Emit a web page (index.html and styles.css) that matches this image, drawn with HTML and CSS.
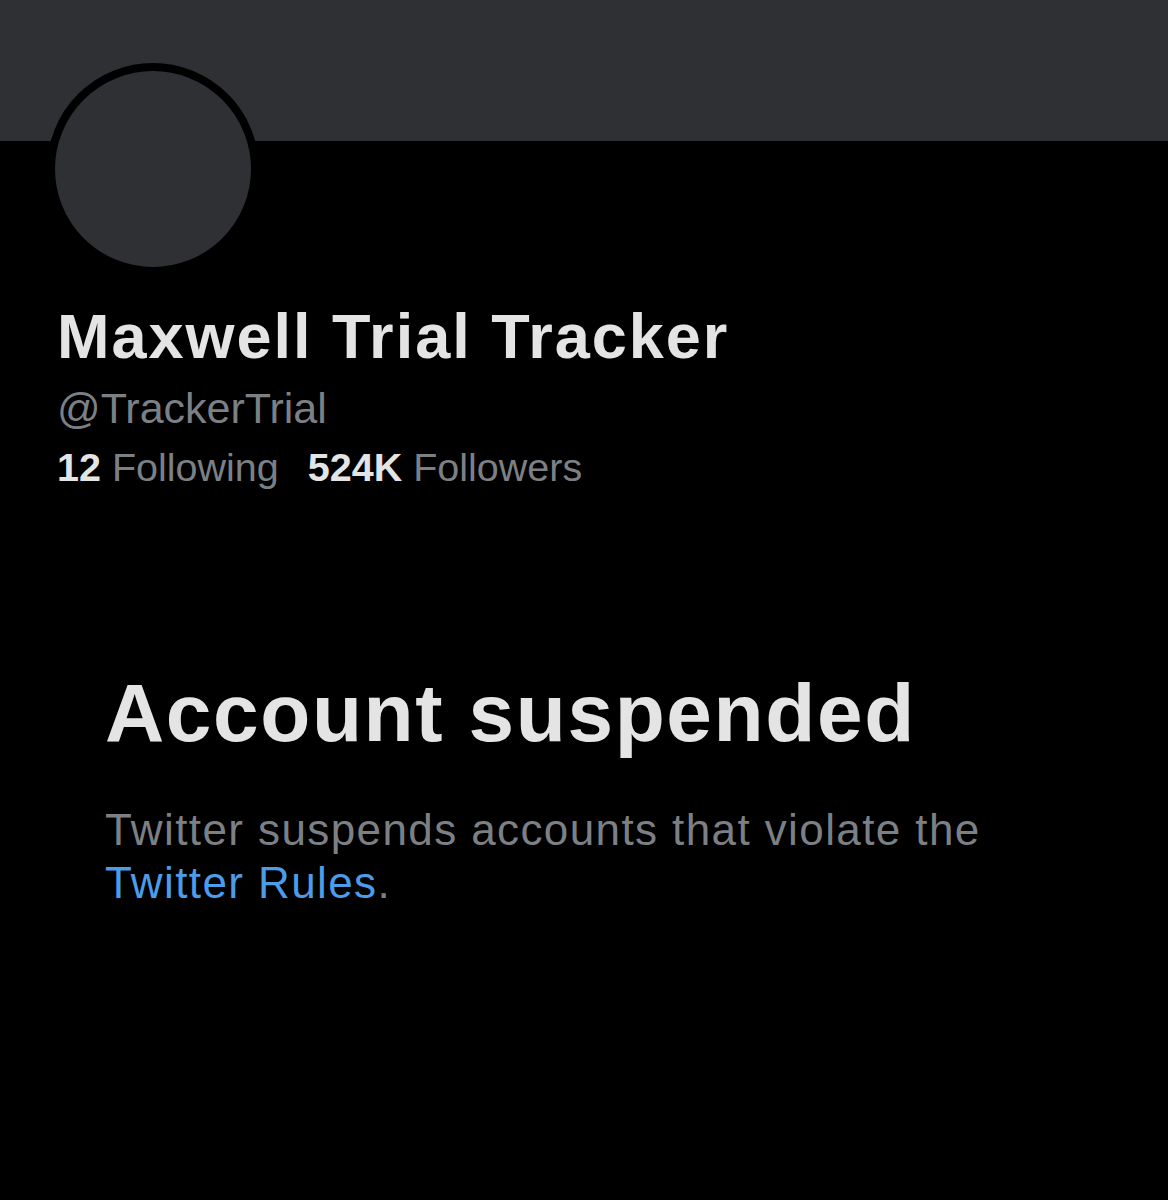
FILE: index.html
```html
<!DOCTYPE html>
<html>
<head>
<meta charset="utf-8">
<link rel="stylesheet" href="styles.css">
</head>
<body>
<div class="banner"></div>
<div class="profile">
  <div class="avatar"></div>
  <h1 class="name">Maxwell Trial Tracker</h1>
  <div class="handle">@TrackerTrial</div>
  <div class="stats">
    <span class="stat"><b>12</b> Following</span>
    <span class="stat"><b>524K</b> Followers</span>
  </div>
</div>
<div class="suspended">
  <h2 class="title">Account suspended</h2>
  <p class="desc">Twitter suspends accounts that violate the<br><a class="link" href="#">Twitter Rules</a>.</p>
</div>
</body>
</html>
```
FILE: styles.css
```css
html, body {
  margin: 0;
  padding: 0;
  background: #000;
}
body {
  font-family: "Liberation Sans", Arial, sans-serif;
  width: 1168px;
  height: 1200px;
  overflow: hidden;
}
.banner {
  height: 141px;
  background: #2f3034;
}
.profile {
  padding-left: 57px;
}
.avatar {
  width: 196px;
  height: 196px;
  border-radius: 50%;
  background: #2f3034;
  border: 8px solid #000;
  margin-left: -10px;
  margin-top: -78px;
}
.name {
  margin: 23px 0 0;
  font-size: 63px;
  line-height: 76px;
  font-weight: 700;
  color: #e4e4e4;
  letter-spacing: 2px;
}
.handle {
  margin-top: 8px;
  font-size: 43px;
  line-height: 52px;
  color: #7c8085;
}
.stats {
  margin-top: 10px;
  font-size: 39.5px;
  line-height: 46px;
  color: #7c8085;
  display: flex;
  gap: 29px;
}
.stats b {
  color: #e4e4e4;
  font-weight: 700;
}
.suspended {
  padding-left: 105px;
  margin-top: 175px;
}
.title {
  margin: 0;
  font-size: 82px;
  line-height: 96px;
  font-weight: 700;
  color: #e4e4e4;
  letter-spacing: 1.6px;
}
.desc {
  margin: 42px 0 0;
  font-size: 44px;
  line-height: 53px;
  color: #7c8085;
  letter-spacing: 1.4px;
}
.link {
  color: #4c9ce8;
  text-decoration: none;
}
```
